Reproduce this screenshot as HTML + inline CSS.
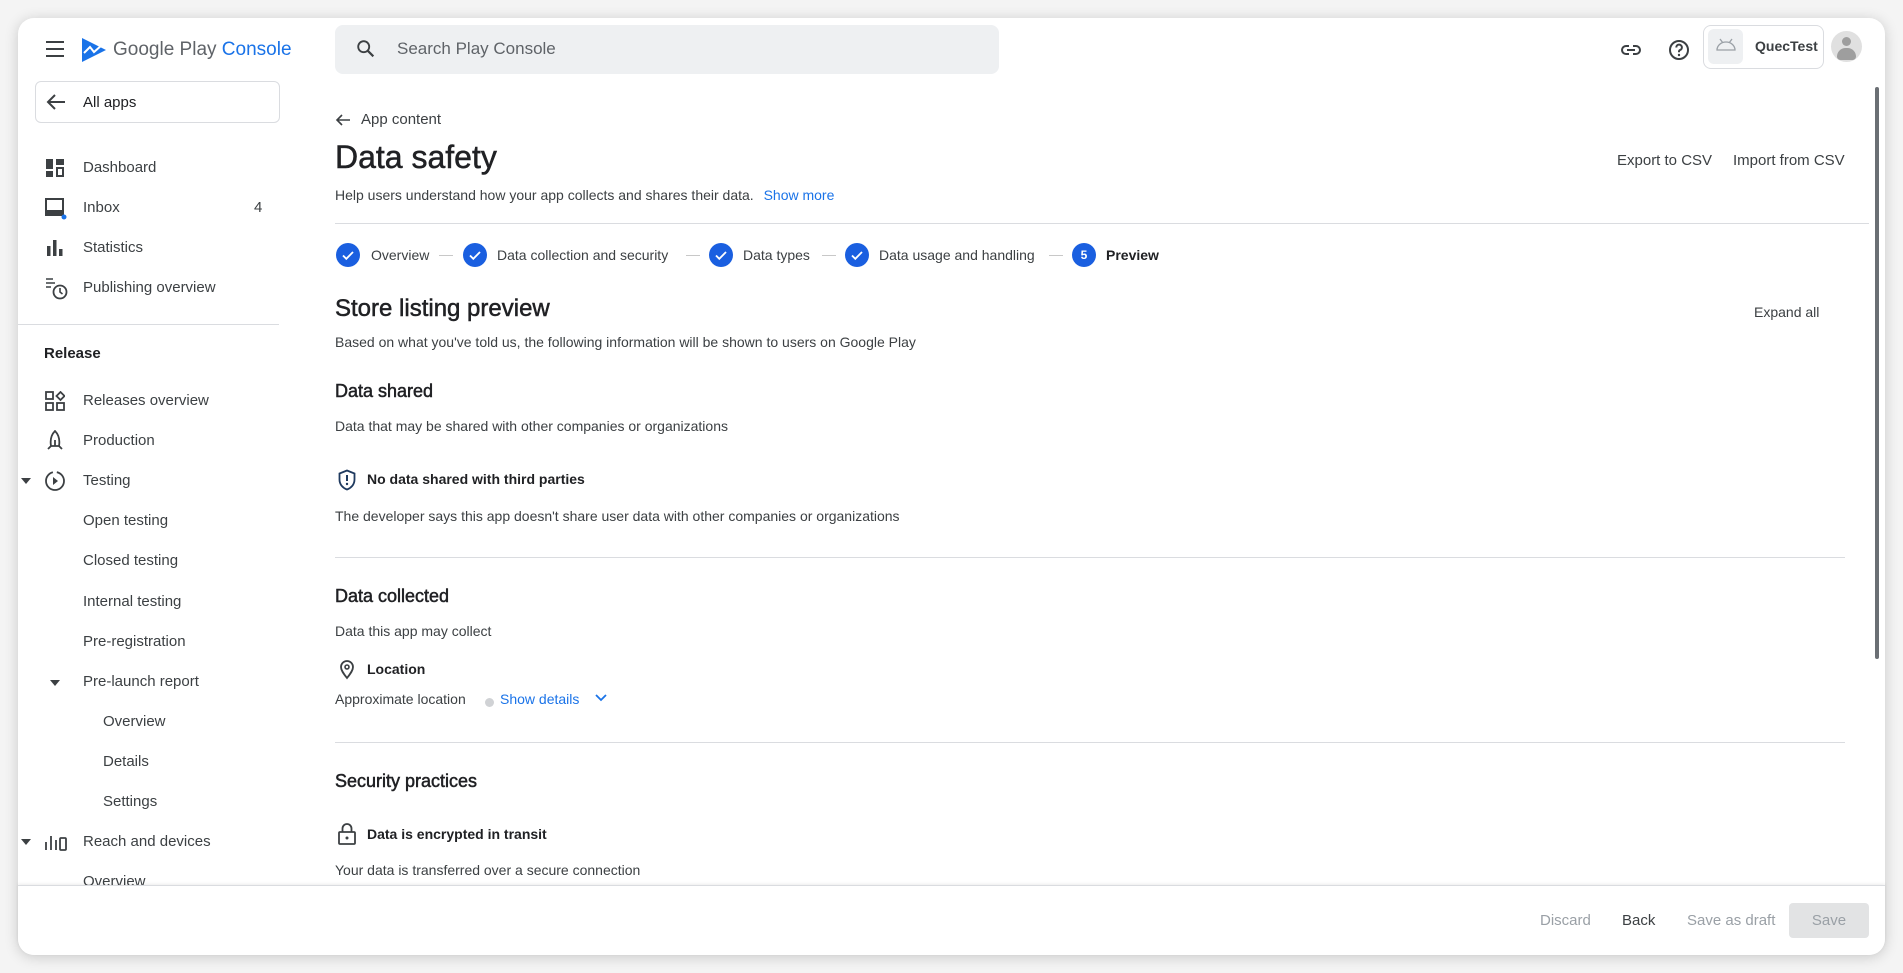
<!DOCTYPE html>
<html><head><meta charset="utf-8"><style>
*{margin:0;padding:0;box-sizing:border-box}
body{width:1903px;height:973px;background:#f4f4f4;font-family:"Liberation Sans",Arial,sans-serif;color:#202124;position:relative;overflow:hidden}
.card{position:absolute;left:18px;top:18px;width:1867px;height:937px;background:#fff;border-radius:16px;box-shadow:0 2px 14px rgba(0,0,0,.18);overflow:hidden}
.t{position:absolute;white-space:nowrap;line-height:20px}
.s{font-size:15px;color:#3c4043}
.m{font-size:14px;color:#3c4043}
.b{font-weight:bold}
.h{-webkit-text-stroke:0.5px currentColor}
svg{position:absolute}
.hr{position:absolute;height:1px;background:#dadce0}
.chk{position:absolute;width:24px;height:24px;border-radius:50%;background:#1a5fe0}
.dash{position:absolute;width:14px;height:1px;background:#c8c8c8;top:255px}
.sb{position:absolute;left:0;top:2px;width:300px;height:900px}
</style></head><body>
<div class="card"></div>
<!-- header -->
<svg style="left:45px;top:40px" width="20" height="18" viewBox="0 0 20 18"><path d="M1 2h18M1 9h18M1 16h18" stroke="#3c4043" stroke-width="2"/></svg>
<svg style="left:80px;top:36px" width="28" height="28" viewBox="0 0 28 28"><path d="M2 2 L26 14 L2 26 Z" fill="#1a73e8"/><path d="M4 17 L10 11 L14 16 L22 9" stroke="#fff" stroke-width="2" fill="none"/></svg>
<div class="t" style="left:113px;top:38px;font-size:19px;line-height:24px;color:#5f6368">Google Play <span style="color:#1a73e8">Console</span></div>
<div style="position:absolute;left:335px;top:25px;width:664px;height:49px;background:#eef0f2;border-radius:8px"></div>
<svg style="left:355px;top:38px" width="22" height="22" viewBox="0 0 24 24"><circle cx="9.5" cy="9.5" r="6" stroke="#3c4043" stroke-width="2" fill="none"/><path d="M14 14l6 6" stroke="#3c4043" stroke-width="2.4"/></svg>
<div class="t" style="left:397px;top:39px;font-size:17px;color:#5f6368">Search Play Console</div>
<svg style="left:1619px;top:38px" width="24" height="24" viewBox="0 0 24 24"><path d="M10 8H7a4 4 0 0 0 0 8h3M14 8h3a4 4 0 0 1 0 8h-3M8 12h8" stroke="#3c4043" stroke-width="2" fill="none"/></svg>
<svg style="left:1667px;top:38px" width="24" height="24" viewBox="0 0 24 24"><circle cx="12" cy="12" r="9" stroke="#3c4043" stroke-width="2" fill="none"/><path d="M9.3 9.5a2.8 2.8 0 1 1 3.6 2.6c-.6.3-.9.8-.9 1.5v.6" stroke="#3c4043" stroke-width="2" fill="none"/><circle cx="12" cy="17" r="1.2" fill="#3c4043"/></svg>
<div style="position:absolute;left:1703px;top:25px;width:121px;height:44px;border:1px solid #dadce0;border-radius:8px"></div>
<div style="position:absolute;left:1708px;top:29px;width:35px;height:35px;background:#eef0f2;border-radius:6px"></div>
<svg style="left:1714px;top:36px" width="24" height="18" viewBox="0 0 24 18"><path d="M3 14a9 8 0 0 1 18 0Z M6 3l3 4 M18 3l-3 4" stroke="#9aa0a6" stroke-width="1.3" fill="none"/></svg>
<div class="t b" style="left:1755px;top:36px;font-size:14px;color:#3c4043">QuecTest</div>
<div style="position:absolute;left:1831px;top:31px;width:31px;height:31px;border-radius:50%;background:#e0e0e0;overflow:hidden"><div style="position:absolute;left:11px;top:6px;width:9px;height:9px;border-radius:50%;background:#9e9e9e"></div><div style="position:absolute;left:6px;top:17px;width:19px;height:12px;border-radius:10px 10px 4px 4px;background:#9e9e9e"></div></div>
<!-- sidebar -->
<div style="position:absolute;left:35px;top:81px;width:245px;height:42px;border:1px solid #dadce0;border-radius:6px"></div>
<svg style="left:45px;top:92px" width="22" height="20" viewBox="0 0 22 20"><path d="M20 10H3M10 3l-7 7 7 7" stroke="#3c4043" stroke-width="2" fill="none"/></svg>
<div class="t s" style="left:83px;top:93px;color:#202124">All apps</div>
<div class="sb">
<svg style="left:45px;top:156px" width="20" height="20" viewBox="0 0 20 20" fill="#3c4043"><rect x="1" y="1" width="7" height="10"/><rect x="11" y="1" width="8" height="6"/><rect x="1" y="13" width="7" height="6"/><path d="M11 9h8v10h-8z M13 11v6h4v-6z" fill-rule="evenodd"/></svg>
<div class="t s" style="left:83px;top:156px">Dashboard</div>
<svg style="left:45px;top:196px" width="22" height="22" viewBox="0 0 22 22"><rect x="1" y="1" width="17" height="16" fill="none" stroke="#3c4043" stroke-width="2"/><rect x="1" y="12" width="17" height="5" fill="#3c4043"/><circle cx="19" cy="19" r="2.5" fill="#1a73e8"/></svg>
<div class="t s" style="left:83px;top:196px">Inbox</div>
<div class="t s" style="left:254px;top:196px">4</div>
<svg style="left:46px;top:237px" width="18" height="18" viewBox="0 0 18 18" fill="#3c4043"><rect x="1" y="7" width="3.5" height="10"/><rect x="7" y="1" width="3.5" height="16"/><rect x="13" y="10" width="3.5" height="7"/></svg>
<div class="t s" style="left:83px;top:236px">Statistics</div>
<svg style="left:45px;top:275px" width="24" height="24" viewBox="0 0 24 24"><path d="M1 2h7M1 6h9M1 10h5" stroke="#3c4043" stroke-width="1.6"/><circle cx="15" cy="15" r="6.5" stroke="#3c4043" stroke-width="1.8" fill="none"/><path d="M15 11v4l2.5 2" stroke="#3c4043" stroke-width="1.6" fill="none"/></svg>
<div class="t s" style="left:83px;top:276px">Publishing overview</div>
<div class="t s b" style="left:44px;top:342px;color:#202124">Release</div>
<svg style="left:45px;top:389px" width="20" height="20" viewBox="0 0 20 20" fill="none" stroke="#3c4043" stroke-width="1.8"><rect x="1" y="1" width="7" height="7"/><rect x="1" y="12" width="7" height="7"/><rect x="12" y="12" width="7" height="7"/><path d="M15.5 1l4 4-4 4-4-4z"/></svg>
<div class="t s" style="left:83px;top:389px">Releases overview</div>
<svg style="left:46px;top:428px" width="18" height="20" viewBox="0 0 18 20" fill="none" stroke="#3c4043" stroke-width="1.8"><path d="M9 1c-4 4-5 9-4 15h8c1-6 0-11-4-15zM5 16l-3 3M13 16l3 3M9 10v6"/></svg>
<div class="t s" style="left:83px;top:429px">Production</div>
<svg style="left:20px;top:475px" width="12" height="8" viewBox="0 0 12 8"><path d="M1 1h10L6 7z" fill="#3c4043"/></svg>
<svg style="left:44px;top:468px" width="22" height="22" viewBox="0 0 22 22"><circle cx="11" cy="11" r="9" stroke="#3c4043" stroke-width="1.8" fill="none" stroke-dasharray="40 4"/><path d="M9 7l5 4-5 4z" fill="#3c4043"/></svg>
<div class="t s" style="left:83px;top:469px">Testing</div>
<div class="t s" style="left:83px;top:509px">Open testing</div>
<div class="t s" style="left:83px;top:549px">Closed testing</div>
<div class="t s" style="left:83px;top:590px">Internal testing</div>
<div class="t s" style="left:83px;top:630px">Pre-registration</div>
<svg style="left:49px;top:677px" width="12" height="8" viewBox="0 0 12 8"><path d="M1 1h10L6 7z" fill="#3c4043"/></svg>
<div class="t s" style="left:83px;top:670px">Pre-launch report</div>
<div class="t s" style="left:103px;top:710px">Overview</div>
<div class="t s" style="left:103px;top:750px">Details</div>
<div class="t s" style="left:103px;top:790px">Settings</div>
<svg style="left:20px;top:836px" width="12" height="8" viewBox="0 0 12 8"><path d="M1 1h10L6 7z" fill="#3c4043"/></svg>
<svg style="left:44px;top:830px" width="24" height="20" viewBox="0 0 24 20" fill="none" stroke="#3c4043" stroke-width="1.8"><path d="M2 18V10M7 18V4M12 18V8"/><rect x="16" y="6" width="6" height="12" rx="1"/></svg>
<div class="t s" style="left:83px;top:830px">Reach and devices</div>
<div class="t s" style="left:83px;top:870px">Overview</div>
</div>
<div class="hr" style="left:18px;top:324px;width:261px"></div>
<!-- main -->
<svg style="left:335px;top:112px" width="16" height="16" viewBox="0 0 16 16"><path d="M15 8H2M7 3L2 8l5 5" stroke="#3c4043" stroke-width="1.6" fill="none"/></svg>
<div class="t" style="left:361px;top:110px;font-size:15px;color:#3c4043">App content</div>
<div class="t h" style="left:335px;top:137px;font-size:32px;line-height:40px;color:#202124">Data safety</div>
<div class="t m" style="left:335px;top:185px">Help users understand how your app collects and shares their data. <span style="color:#1a73e8;margin-left:6px">Show more</span></div>
<div class="t m" style="left:1617px;top:151px;font-size:15px">Export to CSV</div>
<div class="t m" style="left:1733px;top:151px;font-size:15px">Import from CSV</div>
<div style="position:absolute;left:1875px;top:87px;width:4px;height:572px;background:#6b6f74;border-radius:2px"></div>
<div class="hr" style="left:335px;top:223px;width:1534px"></div>
<!-- stepper -->
<div class="chk" style="left:336px;top:243px"></div>
<div class="chk" style="left:463px;top:243px"></div>
<div class="chk" style="left:709px;top:243px"></div>
<div class="chk" style="left:845px;top:243px"></div>
<div class="chk" style="left:1072px;top:243px;color:#fff;font-size:12px;font-weight:bold;text-align:center;line-height:24px">5</div>
<svg style="left:336px;top:243px" width="24" height="24" viewBox="0 0 24 24"><path d="M7 12.5l3.3 3.3L17 9" stroke="#fff" stroke-width="1.8" fill="none"/></svg>
<svg style="left:463px;top:243px" width="24" height="24" viewBox="0 0 24 24"><path d="M7 12.5l3.3 3.3L17 9" stroke="#fff" stroke-width="1.8" fill="none"/></svg>
<svg style="left:709px;top:243px" width="24" height="24" viewBox="0 0 24 24"><path d="M7 12.5l3.3 3.3L17 9" stroke="#fff" stroke-width="1.8" fill="none"/></svg>
<svg style="left:845px;top:243px" width="24" height="24" viewBox="0 0 24 24"><path d="M7 12.5l3.3 3.3L17 9" stroke="#fff" stroke-width="1.8" fill="none"/></svg>
<div class="t m" style="left:371px;top:245px">Overview</div>
<div class="dash" style="left:439px"></div>
<div class="t m" style="left:497px;top:245px">Data collection and security</div>
<div class="dash" style="left:686px"></div>
<div class="t m" style="left:743px;top:245px">Data types</div>
<div class="dash" style="left:822px"></div>
<div class="t m" style="left:879px;top:245px">Data usage and handling</div>
<div class="dash" style="left:1049px"></div>
<div class="t m b" style="left:1106px;top:245px;color:#202124">Preview</div>
<div class="t h" style="left:335px;top:294px;font-size:24px;line-height:30px;color:#202124">Store listing preview</div>
<div class="t m" style="left:1754px;top:302px">Expand all</div>
<div class="t m" style="left:335px;top:332px">Based on what you've told us, the following information will be shown to users on Google Play</div>
<div class="t h" style="left:335px;top:380px;font-size:18px;line-height:22px;color:#202124">Data shared</div>
<div class="t m" style="left:335px;top:416px">Data that may be shared with other companies or organizations</div>
<svg style="left:337px;top:469px" width="20" height="22" viewBox="0 0 20 22"><path d="M10 1.5L2.5 4.5v6c0 5 3.3 8.5 7.5 10 4.2-1.5 7.5-5 7.5-10v-6z" stroke="#1f3a5f" stroke-width="1.8" fill="none"/><path d="M10 6v6" stroke="#1f3a5f" stroke-width="2"/><circle cx="10" cy="15" r="1.2" fill="#1f3a5f"/></svg>
<div class="t m b" style="left:367px;top:469px;color:#202124">No data shared with third parties</div>
<div class="t m" style="left:335px;top:506px">The developer says this app doesn't share user data with other companies or organizations</div>
<div class="hr" style="left:335px;top:557px;width:1510px"></div>
<div class="t h" style="left:335px;top:585px;font-size:18px;line-height:22px;color:#202124">Data collected</div>
<div class="t m" style="left:335px;top:621px">Data this app may collect</div>
<svg style="left:337px;top:658px" width="20" height="22" viewBox="0 0 20 22"><path d="M10 20c-4-5-6-8-6-11a6 6 0 0 1 12 0c0 3-2 6-6 11z" stroke="#3c4043" stroke-width="1.8" fill="none"/><circle cx="10" cy="9" r="2" stroke="#3c4043" stroke-width="1.6" fill="none"/></svg>
<div class="t m b" style="left:367px;top:659px;color:#202124">Location</div>
<div class="t m" style="left:335px;top:689px">Approximate location</div>
<div style="position:absolute;left:485px;top:698px;width:9px;height:9px;border-radius:50%;background:#d0d2d5"></div>
<div class="t m" style="left:500px;top:689px;color:#1a73e8">Show details</div>
<svg style="left:594px;top:693px" width="14" height="10" viewBox="0 0 14 10"><path d="M2 2l5 5 5-5" stroke="#1a73e8" stroke-width="1.8" fill="none"/></svg>
<div class="hr" style="left:335px;top:742px;width:1510px"></div>
<div class="t h" style="left:335px;top:770px;font-size:18px;line-height:22px;color:#202124">Security practices</div>
<svg style="left:337px;top:822px" width="20" height="24" viewBox="0 0 20 24"><rect x="2" y="10" width="16" height="12" rx="1" stroke="#3c4043" stroke-width="1.8" fill="none"/><path d="M5.5 10V6.5a4.5 4.5 0 0 1 9 0V10" stroke="#3c4043" stroke-width="1.8" fill="none"/><circle cx="10" cy="16" r="1.5" fill="#3c4043"/></svg>
<div class="t m b" style="left:367px;top:824px;color:#202124">Data is encrypted in transit</div>
<div class="t m" style="left:335px;top:860px">Your data is transferred over a secure connection</div>
<!-- bottom bar -->
<div style="position:absolute;left:18px;top:885px;width:1867px;height:70px;background:#fff;border-top:1px solid #dadce0;box-shadow:0 -1px 3px rgba(0,0,0,.08);border-radius:0 0 16px 16px"></div>
<div class="t m" style="left:1540px;top:911px;color:#9aa0a6;font-size:15px">Discard</div>
<div class="t m" style="left:1622px;top:911px;color:#3c4043;font-size:15px">Back</div>
<div class="t m" style="left:1687px;top:911px;color:#9aa0a6;font-size:15px">Save as draft</div>
<div style="position:absolute;left:1789px;top:903px;width:80px;height:35px;background:#e2e3e4;border-radius:4px;color:#9aa0a6;font-size:15px;text-align:center;line-height:35px">Save</div>
</body></html>
